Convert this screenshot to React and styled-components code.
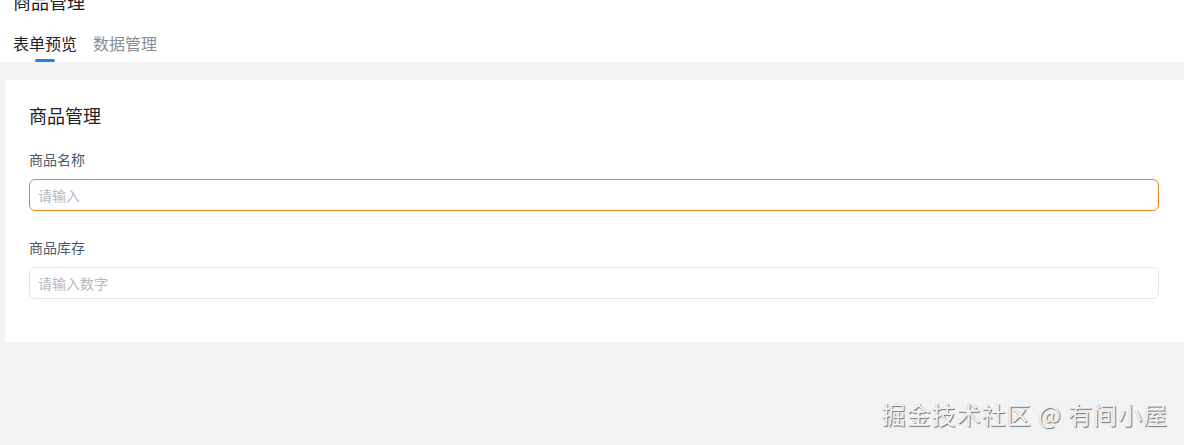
import React from "react";
import styled, { createGlobalStyle } from "styled-components";

const Global = createGlobalStyle`
  html, body { margin: 0; padding: 0; background: #f2f3f5; }
  body {
    font-family: "Noto Sans CJK SC", "Noto Sans", sans-serif;
    color: #1d2129;
    overflow: hidden;
  }
  #root { width: 1184px; height: 445px; position: relative; overflow: hidden; }
`;

const Page = styled.div`
  width: 1184px;
  height: 445px;
  display: flex;
  flex-direction: column;
  background: #f2f3f5;
`;

const Header = styled.header`
  background: #fff;
  padding: 0 13px;
  display: flex;
  flex-direction: column;
`;

const PageTitle = styled.h1`
  margin: -12px 0 0;
  font-size: 18px;
  line-height: 26px;
  font-weight: 400;
  color: #1d2129;
`;

const Tabs = styled.nav`
  display: flex;
  gap: 16px;
  margin-top: 17px;
`;

const Tab = styled.div`
  position: relative;
  font-size: 16px;
  line-height: 24px;
  padding-bottom: 7px;
  color: ${(p) => (p.$active ? "#1d2129" : "#8a8d92")};
  &::after {
    content: "";
    display: ${(p) => (p.$active ? "block" : "none")};
    position: absolute;
    left: 50%;
    bottom: 0;
    width: 20px;
    height: 3px;
    margin-left: -10px;
    border-radius: 2px;
    background: #1e80ff;
  }
`;

const Body = styled.main`
  padding: 18px 0 0 5px;
`;

const Card = styled.section`
  background: #fff;
  padding: 22px 25px 43px 24px;
  display: flex;
  flex-direction: column;
`;

const CardTitle = styled.h2`
  margin: 0 0 20px;
  font-size: 18px;
  line-height: 26px;
  font-weight: 400;
  color: #1d2129;
`;

const Field = styled.div`
  display: flex;
  flex-direction: column;
  gap: 9px;
  & + & { margin-top: 25px; }
`;

const Label = styled.label`
  font-size: 14px;
  line-height: 22px;
  color: #4e5969;
`;

const Input = styled.input`
  box-sizing: border-box;
  height: 32px;
  width: 100%;
  border-radius: 6px;
  border: 1px solid ${(p) => (p.$focused ? "#e08a1e" : "#e5e6eb")};
  padding: 0 8px;
  font-family: inherit;
  font-size: 14px;
  color: #1d2129;
  background: #fff;
  outline: none;
  &::placeholder { color: #b5b9bf; }
`;

const Watermark = styled.div`
  position: absolute;
  right: 16px;
  bottom: 15px;
  font-size: 24px;
  line-height: 32px;
  color: #f4f4f4;
  text-shadow: 1px 1px 1px rgba(0, 0, 0, 0.55), -0.5px -0.5px 0 rgba(0,0,0,0.15);
  letter-spacing: 1px;
  font-family: "Noto Sans CJK SC", sans-serif;
`;

export default function App() {
  return (
    <>
      <Global />
      <Page>
        <Header>
          <PageTitle>商品管理</PageTitle>
          <Tabs>
            <Tab $active>表单预览</Tab>
            <Tab>数据管理</Tab>
          </Tabs>
        </Header>
        <Body>
          <Card>
            <CardTitle>商品管理</CardTitle>
            <Field>
              <Label>商品名称</Label>
              <Input $focused placeholder="请输入" />
            </Field>
            <Field>
              <Label>商品库存</Label>
              <Input placeholder="请输入数字" />
            </Field>
          </Card>
        </Body>
      </Page>
      <Watermark>掘金技术社区 @ 有间小屋</Watermark>
    </>
  );
}
